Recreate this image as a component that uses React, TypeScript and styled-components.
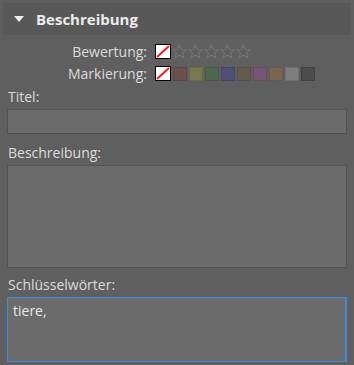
import React from "react";
import styled, { createGlobalStyle } from "styled-components";

const Global = createGlobalStyle`
  html, body { margin: 0; padding: 0; background: #5f5f5f; }
  body { font-family: "Open Sans", "Noto Sans", sans-serif; }
  #root { width: 354px; height: 365px; overflow: hidden; }
`;

const Panel = styled.div`
  width: 354px;
  height: 365px;
  box-sizing: border-box;
  padding: 3px 3px 0 3px;
  background: #5f5f5f;
  display: flex;
  flex-direction: column;
`;

const Header = styled.div`
  height: 32px;
  background: #585858;
  display: flex;
  align-items: center;
  padding-left: 11px;
  gap: 12px;
  color: #ececec;
  font-weight: 700;
  font-size: 15px;
`;

const Triangle = styled.div`
  width: 0;
  height: 0;
  border-left: 5.5px solid transparent;
  border-right: 5.5px solid transparent;
  border-top: 6px solid #f0f0f0;
`;

const Body = styled.div`
  display: flex;
  flex-direction: column;
  padding: 0 4px;
`;

const RatingGrid = styled.div`
  display: grid;
  grid-template-columns: 140px auto;
  column-gap: 8px;
  row-gap: 7px;
  align-items: center;
  margin-top: 9px;
  margin-bottom: 7px;
`;

const RowLabel = styled.div`
  text-align: right;
  color: #dcdcdc;
  font-size: 14px;
  line-height: 15px;
`;

const Items = styled.div<{ $gap: number }>`
  display: flex;
  align-items: center;
  gap: ${(p) => p.$gap}px;
`;

const Swatch = styled.div<{ $c: string }>`
  width: 14px;
  height: 14px;
  box-sizing: border-box;
  background: ${(p) => p.$c};
  border: 1px solid rgba(0, 0, 0, 0.12);
`;

const FieldLabel = styled.div`
  color: #dcdcdc;
  font-size: 14px;
  line-height: 18px;
  padding-left: 1px;
  margin-bottom: 3px;
`;

const Input = styled.div<{ $h: number; $focus?: boolean; $mb?: number }>`
  height: ${(p) => p.$h}px;
  box-sizing: border-box;
  background: #6b6b6b;
  border: 1px solid ${(p) => (p.$focus ? "#3c8be0" : "#525252")};
  ${(p) => (p.$focus ? "border-right-width: 2px;" : "")}
  margin-bottom: ${(p) => p.$mb ?? 0}px;
  color: #e8e8e8;
  font-size: 14px;
  padding: 5px 5px;
  line-height: 16px;
`;

const NoneBox = () => (
  <svg width="16" height="15" viewBox="0 0 16 15" style={{ display: "block" }}>
    <rect x="0.5" y="0.5" width="15" height="14" fill="#ffffff" stroke="#000" />
    <line x1="2" y1="13" x2="14" y2="2" stroke="#ff1010" strokeWidth="1.8" />
  </svg>
);

const Star = () => (
  <svg width="15" height="15" viewBox="0 0 16 16" style={{ display: "block" }}>
    <polygon
      points="8,0.8 10,5.9 15.3,6.1 11.2,9.5 12.6,14.8 8,11.8 3.4,14.8 4.8,9.5 0.7,6.1 6,5.9"
      fill="none"
      stroke="#757575"
      strokeWidth="1.1"
    />
  </svg>
);

const colors = [
  "#6b5050",
  "#78784f",
  "#4e674e",
  "#4f4f78",
  "#655a50",
  "#765676",
  "#7b6552",
  "#7e7e7e",
  "#4b4b4b",
];

export default function App() {
  return (
    <>
      <Global />
      <Panel>
        <Header>
          <Triangle />
          <span>Beschreibung</span>
        </Header>
        <Body>
          <RatingGrid>
            <RowLabel>Bewertung:</RowLabel>
            <Items $gap={1}>
              <NoneBox />
              {[0, 1, 2, 3, 4].map((i) => (
                <Star key={i} />
              ))}
            </Items>
            <RowLabel>Markierung:</RowLabel>
            <Items $gap={2}>
              <NoneBox />
              {colors.map((c) => (
                <Swatch key={c} $c={c} />
              ))}
            </Items>
          </RatingGrid>
          <FieldLabel>Titel:</FieldLabel>
          <Input $h={25} $mb={10} />
          <FieldLabel>Beschreibung:</FieldLabel>
          <Input $h={103} $mb={8} />
          <FieldLabel>Schlüsselwörter:</FieldLabel>
          <Input $h={65} $focus>
            tiere,
          </Input>
        </Body>
      </Panel>
    </>
  );
}
